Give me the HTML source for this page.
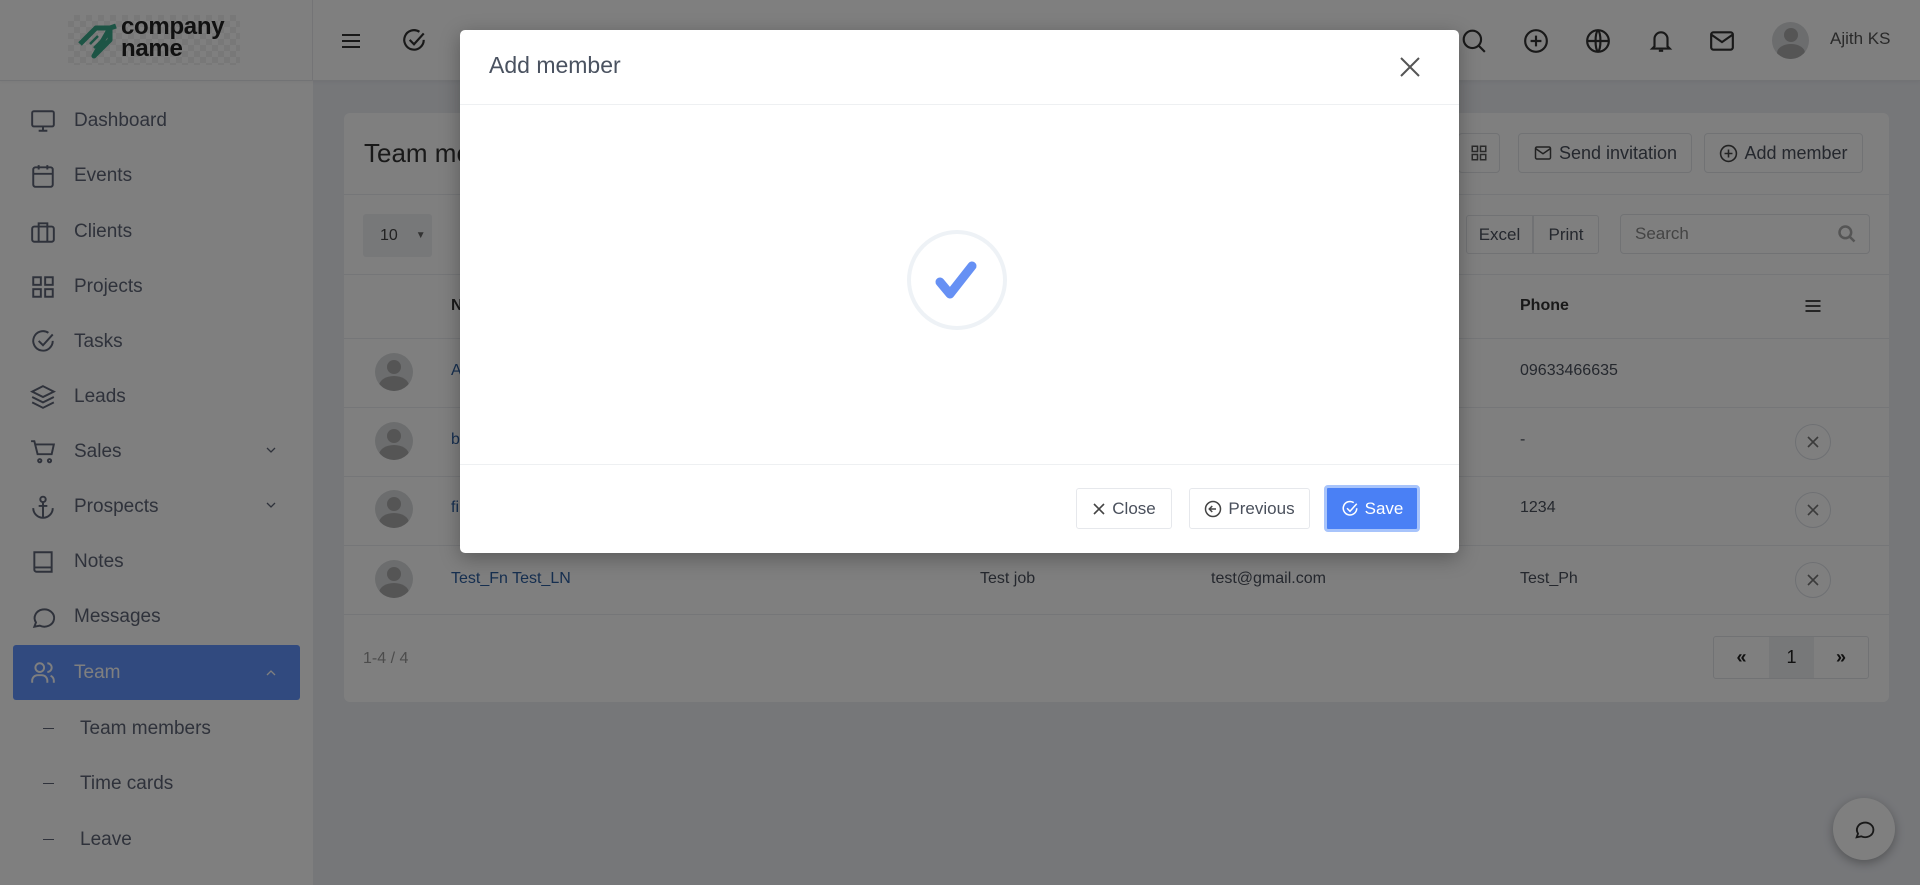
<!DOCTYPE html>
<html><head><meta charset="utf-8"><style>
*{box-sizing:border-box;margin:0;padding:0}
body{width:1920px;height:885px;overflow:hidden;background:#eceef3;font-family:"Liberation Sans",sans-serif;color:#343a46;position:relative}
.a{position:absolute}
svg{display:block}
.side{left:0;top:0;width:313px;height:885px;background:#fff}
.top{left:0;top:0;width:1920px;height:81px;background:#fff;border-bottom:1px solid #e4e6ea;box-shadow:0 1px 4px rgba(0,0,0,.05)}
.nav{left:0;width:313px;height:55px;display:flex;align-items:center;font-size:19px;color:#5e6576}
.nav .ic{width:26px;margin-left:30px;margin-right:18px}
.card{left:344px;top:113px;width:1545px;height:589px;background:#fff;border-radius:6px}
.hl{height:1px;background:#eaecf0;left:344px;width:1545px}
.btn{border:1px solid #e2e4e8;border-radius:4px;background:#fff;display:flex;align-items:center;justify-content:center;font-size:18px;color:#4a505c}
.td{font-size:16px;color:#4a505c}
.nm{color:#2c5ea0}
.av{width:38px;height:38px;border-radius:50%;background:#d8dadd;overflow:hidden}
.xc{width:36px;height:36px;border:1px solid #dde0e6;border-radius:50%;display:flex;align-items:center;justify-content:center}
.ov{left:0;top:0;width:1920px;height:885px;background:rgba(0,0,0,.5)}
.modal{left:460px;top:30px;width:999px;height:523px;background:#fff;border-radius:5px;box-shadow:0 5px 20px rgba(0,0,0,.3)}
.mb{border:1px solid #e6e8ec;border-radius:3px;background:#fff;display:flex;align-items:center;justify-content:center;font-size:17px;color:#4a505c;gap:6px}
.dash{width:11px;height:1.5px;background:#5e6576;margin:0 26px 0 43px}
</style></head><body>
<div class="a side"></div>
<div class="a top"></div>
<div class="a" style="left:312px;top:0;width:1px;height:81px;background:#e8e8ec"></div>
<div class="a" style="left:68px;top:15px;width:172px;height:50px;background:repeating-conic-gradient(#f0f0f0 0 25%,#fff 0 50%) 0 0/12px 12px"></div>
<svg class="a" style="left:76px;top:22px" width="44" height="40" viewBox="0 0 44 40"><path d="M4 22 L20 6 L34 6 L40 4 M34 6 L34 18 L18 34 Z" fill="none" stroke="#3aa88a" stroke-width="5" stroke-linejoin="round"/><path d="M14 22l8-8M18 26l8-8" stroke="#3aa88a" stroke-width="2.5"/></svg>
<div class="a" style="left:121px;top:16px;font-size:24px;font-weight:bold;line-height:22px;color:#222;letter-spacing:-0.3px">company<br>name</div>
<svg class="a" style="left:339px;top:29px" width="24" height="24" viewBox="0 0 24 24" fill="none" stroke="#333" stroke-width="2"><path d="M3 6h18M3 12h18M3 18h18"/></svg>
<svg class="a" style="left:401px;top:28px" width="26" height="26" viewBox="0 0 24 24" fill="none" stroke="#333" stroke-width="2"><path d="M21 11a9 9 0 1 1-4-7.5"/><path d="M8 11l4 4 9-10"/></svg>
<svg class="a" style="left:1461px;top:28px" width="26" height="26" viewBox="0 0 24 24" fill="none" stroke="#333" stroke-width="2"><circle cx="10.5" cy="10.5" r="8"/><path d="M16.5 16.5L22 22"/></svg>
<svg class="a" style="left:1523px;top:28px" width="26" height="26" viewBox="0 0 24 24" fill="none" stroke="#333" stroke-width="2"><circle cx="12" cy="12" r="10"/><path d="M12 7v10M7 12h10"/></svg>
<svg class="a" style="left:1585px;top:28px" width="26" height="26" viewBox="0 0 24 24" fill="none" stroke="#333" stroke-width="2"><circle cx="12" cy="12" r="10"/><path d="M2 12h20M12 2c3 3 3 17 0 20M12 2c-3 3-3 17 0 20"/></svg>
<svg class="a" style="left:1648px;top:28px" width="26" height="26" viewBox="0 0 24 24" fill="none" stroke="#333" stroke-width="2"><path d="M6 17V10a6 6 0 0 1 12 0v7l2 2H4z"/><path d="M10 21h4"/></svg>
<svg class="a" style="left:1709px;top:28px" width="26" height="26" viewBox="0 0 24 24" fill="none" stroke="#333" stroke-width="2"><rect x="2" y="4" width="20" height="16" rx="2"/><path d="M2 6l10 7 10-7"/></svg>
<div class="a av" style="left:1772px;top:22px;width:37px;height:37px"><div style="width:14px;height:14px;border-radius:50%;background:#aaa;margin:6px auto 0"></div><div style="width:28px;height:18px;border-radius:50%;background:#aaa;margin:2px auto 0"></div></div>
<div class="a" style="left:1830px;top:29px;font-size:17px;color:#555">Ajith KS</div>
<div class="a nav" style="top:93px"><svg class="ic" width="26" height="26" viewBox="0 0 24 24" fill="none" stroke="#5e6576" stroke-width="1.8"><rect x="2" y="3" width="20" height="14" rx="1.5"/><path d="M8 21h8M12 17v4"/></svg>Dashboard</div>
<div class="a nav" style="top:148px"><svg class="ic" width="26" height="26" viewBox="0 0 24 24" fill="none" stroke="#5e6576" stroke-width="1.8"><rect x="3" y="4" width="18" height="18" rx="2"/><path d="M3 10h18M8 2v4M16 2v4"/></svg>Events</div>
<div class="a nav" style="top:204px"><svg class="ic" width="26" height="26" viewBox="0 0 24 24" fill="none" stroke="#5e6576" stroke-width="1.8"><rect x="2" y="7" width="20" height="14" rx="2"/><path d="M8 21V4h8v17"/></svg>Clients</div>
<div class="a nav" style="top:259px"><svg class="ic" width="26" height="26" viewBox="0 0 24 24" fill="none" stroke="#5e6576" stroke-width="1.8"><rect x="3" y="3" width="7" height="7"/><rect x="14" y="3" width="7" height="7"/><rect x="3" y="14" width="7" height="7"/><rect x="14" y="14" width="7" height="7"/></svg>Projects</div>
<div class="a nav" style="top:314px"><svg class="ic" width="26" height="26" viewBox="0 0 24 24" fill="none" stroke="#5e6576" stroke-width="1.8"><path d="M21 11a9 9 0 1 1-4-7.5"/><path d="M8 11l4 4 9-10"/></svg>Tasks</div>
<div class="a nav" style="top:369px"><svg class="ic" width="26" height="26" viewBox="0 0 24 24" fill="none" stroke="#5e6576" stroke-width="1.8"><path d="M12 2L2 7l10 5 10-5z"/><path d="M2 12l10 5 10-5M2 17l10 5 10-5"/></svg>Leads</div>
<div class="a nav" style="top:424px"><svg class="ic" width="26" height="26" viewBox="0 0 24 24" fill="none" stroke="#5e6576" stroke-width="1.8"><path d="M1 2h3l3 12h13l2-9H5"/><circle cx="9" cy="20" r="1.5"/><circle cx="18" cy="20" r="1.5"/></svg>Sales<svg class="a" style="left:266px;top:23px" width="10" height="7" viewBox="0 0 10 7" fill="none" stroke="#5e6576" stroke-width="1.3"><path d="M1 1l4 4 4-4"/></svg></div>
<div class="a nav" style="top:479px"><svg class="ic" width="26" height="26" viewBox="0 0 24 24" fill="none" stroke="#5e6576" stroke-width="1.8"><circle cx="12" cy="5" r="2.5"/><path d="M12 8v14M3 13a9 9 0 0 0 18 0M8 11h8"/></svg>Prospects<svg class="a" style="left:266px;top:23px" width="10" height="7" viewBox="0 0 10 7" fill="none" stroke="#5e6576" stroke-width="1.3"><path d="M1 1l4 4 4-4"/></svg></div>
<div class="a nav" style="top:534px"><svg class="ic" width="26" height="26" viewBox="0 0 24 24" fill="none" stroke="#5e6576" stroke-width="1.8"><path d="M4 3h16v18H6a2 2 0 0 1-2-2z M4 17h16"/></svg>Notes</div>
<div class="a nav" style="top:589px"><svg class="ic" width="26" height="26" viewBox="0 0 24 24" fill="none" stroke="#5e6576" stroke-width="1.8"><path d="M4 21l1.5-4A9 8 0 1 1 9 20z"/></svg>Messages</div>
<div class="a" style="left:13px;top:645px;width:287px;height:55px;background:#6395ff;border-radius:3px"></div>
<div class="a nav" style="top:645px;color:#fff"><svg class="ic" width="26" height="26" viewBox="0 0 24 24" fill="none" stroke="#fff" stroke-width="1.8"><circle cx="9" cy="7" r="4"/><path d="M2 21v-2a5 5 0 0 1 5-5h4a5 5 0 0 1 5 5v2M16 3a4 4 0 0 1 0 8M22 21v-2a5 5 0 0 0-3-4.5"/></svg>Team<svg class="a" style="left:266px;top:24px" width="10" height="7" viewBox="0 0 10 7" fill="none" stroke="#fff" stroke-width="1.3"><path d="M1 6l4-4 4 4"/></svg></div>
<div class="a nav" style="top:701px"><span class="dash"></span>Team members</div>
<div class="a nav" style="top:756px"><span class="dash"></span>Time cards</div>
<div class="a nav" style="top:812px"><span class="dash"></span>Leave</div>
<div class="a card"></div>
<div class="a" style="left:364px;top:138px;font-size:26px;color:#333">Team members</div>
<div class="a hl" style="top:194px"></div>
<div class="a btn" style="left:1458px;top:133px;width:42px;height:40px"><svg width="18" height="18" viewBox="0 0 24 24" fill="none" stroke="#555" stroke-width="2"><rect x="3" y="3" width="7" height="7"/><rect x="14" y="3" width="7" height="7"/><rect x="3" y="14" width="7" height="7"/><rect x="14" y="14" width="7" height="7"/></svg></div>
<div class="a btn" style="left:1518px;top:133px;width:174px;height:40px;gap:6px"><svg width="20" height="18" viewBox="0 0 24 24" fill="none" stroke="#444" stroke-width="2"><rect x="2" y="4" width="20" height="16" rx="2"/><path d="M2 6l10 7 10-7"/></svg>Send invitation</div>
<div class="a btn" style="left:1704px;top:133px;width:159px;height:40px;gap:6px"><svg width="19" height="19" viewBox="0 0 24 24" fill="none" stroke="#444" stroke-width="2"><circle cx="12" cy="12" r="10"/><path d="M12 7v10M7 12h10"/></svg>Add member</div>
<div class="a" style="left:363px;top:214px;width:69px;height:43px;background:#eef0f3;border-radius:3px;font-size:16px;color:#444;display:flex;align-items:center;padding-left:17px">10<span style="margin-left:18px;font-size:10px;color:#666">&#9660;</span></div>
<div class="a btn" style="left:1466px;top:215px;width:67px;height:39px;font-size:17px;border-radius:3px 0 0 3px">Excel</div>
<div class="a btn" style="left:1533px;top:215px;width:66px;height:39px;font-size:17px;border-radius:0 3px 3px 0">Print</div>
<div class="a btn" style="left:1620px;top:214px;width:250px;height:40px;justify-content:space-between;padding:0 12px 0 14px;font-size:17px;color:#888">Search<svg width="20" height="20" viewBox="0 0 24 24" fill="none" stroke="#aaa" stroke-width="3"><circle cx="10" cy="10" r="7"/><path d="M15 15l6 6"/></svg></div>
<div class="a hl" style="top:274px"></div>
<div class="a" style="left:451px;top:297px;font-size:16px;font-weight:bold;color:#333">Name</div>
<div class="a" style="left:1520px;top:297px;font-size:16px;font-weight:bold;color:#333">Phone</div>
<svg class="a" style="left:1803px;top:296px" width="20" height="20" viewBox="0 0 24 24" fill="none" stroke="#333" stroke-width="2.2"><path d="M3 6h18M3 12h18M3 18h18"/></svg>
<div class="a hl" style="top:338px"></div>
<div class="a hl" style="top:407px"></div>
<div class="a hl" style="top:476px"></div>
<div class="a hl" style="top:545px"></div>
<div class="a hl" style="top:614px"></div>
<div class="a av" style="left:375px;top:353px"><div style="width:14px;height:14px;border-radius:50%;background:#aaa;margin:7px auto 0"></div><div style="width:30px;height:20px;border-radius:50%;background:#aaa;margin:2px auto 0"></div></div>
<div class="a av" style="left:375px;top:422px"><div style="width:14px;height:14px;border-radius:50%;background:#aaa;margin:7px auto 0"></div><div style="width:30px;height:20px;border-radius:50%;background:#aaa;margin:2px auto 0"></div></div>
<div class="a av" style="left:375px;top:490px"><div style="width:14px;height:14px;border-radius:50%;background:#aaa;margin:7px auto 0"></div><div style="width:30px;height:20px;border-radius:50%;background:#aaa;margin:2px auto 0"></div></div>
<div class="a av" style="left:375px;top:560px"><div style="width:14px;height:14px;border-radius:50%;background:#aaa;margin:7px auto 0"></div><div style="width:30px;height:20px;border-radius:50%;background:#aaa;margin:2px auto 0"></div></div>
<div class="a td nm" style="left:451px;top:362px">A</div>
<div class="a td nm" style="left:451px;top:431px">b</div>
<div class="a td nm" style="left:451px;top:499px">fi</div>
<div class="a td nm" style="left:451px;top:570px">Test_Fn Test_LN</div>
<div class="a td" style="left:980px;top:570px">Test job</div>
<div class="a td" style="left:1211px;top:570px">test@gmail.com</div>
<div class="a td" style="left:1520px;top:362px">09633466635</div>
<div class="a td" style="left:1520px;top:431px">-</div>
<div class="a td" style="left:1520px;top:499px">1234</div>
<div class="a td" style="left:1520px;top:570px">Test_Ph</div>
<div class="a xc" style="left:1795px;top:424px"><svg width="14" height="14" viewBox="0 0 14 14" stroke="#777" stroke-width="1.6"><path d="M2 2l10 10M12 2L2 12"/></svg></div>
<div class="a xc" style="left:1795px;top:492px"><svg width="14" height="14" viewBox="0 0 14 14" stroke="#777" stroke-width="1.6"><path d="M2 2l10 10M12 2L2 12"/></svg></div>
<div class="a xc" style="left:1795px;top:562px"><svg width="14" height="14" viewBox="0 0 14 14" stroke="#777" stroke-width="1.6"><path d="M2 2l10 10M12 2L2 12"/></svg></div>
<div class="a" style="left:363px;top:650px;font-size:16px;color:#999">1-4 / 4</div>
<div class="a" style="left:1713px;top:636px;width:156px;height:43px;border:1px solid #e2e4e8;border-radius:3px;display:flex;font-size:18px;color:#222">
<div style="width:55px;display:flex;align-items:center;justify-content:center;font-weight:bold">&laquo;</div>
<div style="width:45px;display:flex;align-items:center;justify-content:center;background:#eef0f3">1</div>
<div style="flex:1;display:flex;align-items:center;justify-content:center;font-weight:bold">&raquo;</div></div>
<div class="a" style="left:1833px;top:798px;width:62px;height:62px;border-radius:50%;background:#fff;box-shadow:0 3px 10px rgba(0,0,0,.3);display:flex;align-items:center;justify-content:center"><svg width="22" height="22" viewBox="0 0 24 24" fill="none" stroke="#333" stroke-width="2"><path d="M4 21l1.5-4A9 8 0 1 1 9 20z"/></svg></div>
<div class="a ov"></div>
<div class="a modal">
<div class="a" style="left:29px;top:22px;font-size:23px;color:#4a5260">Add member</div>
<svg class="a" style="left:939px;top:26px" width="22" height="22" viewBox="0 0 22 22" stroke="#555" stroke-width="2"><path d="M2 2l18 18M20 2L2 20"/></svg>
<div class="a" style="left:0;top:74px;width:999px;height:1px;background:#eef0f2"></div>
<div class="a" style="left:447px;top:200px;width:100px;height:100px;border:4px solid #eef2f6;border-radius:50%"></div>
<svg class="a" style="left:472px;top:228px" width="50" height="44" viewBox="0 0 50 44"><path d="M8 24l10 12L40 8" fill="none" stroke="#6690f4" stroke-width="9" stroke-linecap="round" stroke-linejoin="round"/></svg>
<div class="a" style="left:0;top:434px;width:999px;height:1px;background:#eef0f2"></div>
<div class="a mb" style="left:616px;top:458px;width:96px;height:41px"><svg width="14" height="14" viewBox="0 0 14 14" stroke="#444" stroke-width="1.6"><path d="M2 2l10 10M12 2L2 12"/></svg>Close</div>
<div class="a mb" style="left:729px;top:458px;width:121px;height:41px"><svg width="18" height="18" viewBox="0 0 24 24" fill="none" stroke="#444" stroke-width="2"><circle cx="12" cy="12" r="10"/><path d="M16 12H8M11 8l-4 4 4 4"/></svg>Previous</div>
<div class="a mb" style="left:864px;top:455px;width:96px;height:47px;background:#4a80f5;border:3px solid #a8c4fb;border-radius:4px;color:#fff"><svg width="18" height="18" viewBox="0 0 24 24" fill="none" stroke="#fff" stroke-width="2"><path d="M21 11a9 9 0 1 1-4-7.5"/><path d="M8 11l4 4 9-10"/></svg>Save</div>
</div>
</body></html>
